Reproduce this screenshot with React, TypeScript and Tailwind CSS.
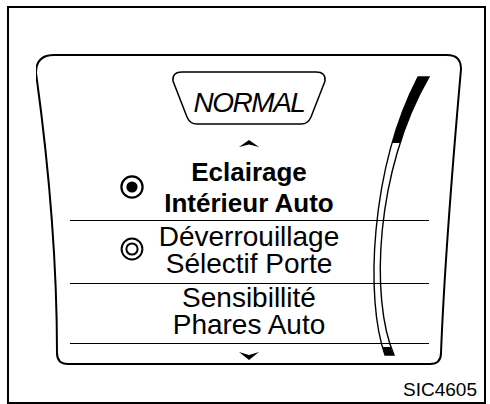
import React from "react";

const band =
  "M418 77 C370 170 365 300 385 355 L394 355 C370 300 375 170 429 77 Z";

function RadioFilled() {
  return (
    <svg width="24" height="24" viewBox="0 0 24 24" fill="none">
      <circle cx="12" cy="12" r="10.6" stroke="black" strokeWidth="2.2" />
      <circle cx="12" cy="12" r="5.6" fill="black" />
    </svg>
  );
}

function RadioRing() {
  return (
    <svg width="24" height="24" viewBox="0 0 24 24" fill="none">
      <circle cx="12" cy="12" r="10.4" stroke="black" strokeWidth="2" />
      <circle cx="12" cy="12" r="5.6" stroke="black" strokeWidth="2" />
    </svg>
  );
}

export default function App() {
  return (
    <div className="w-[490px] h-[404px] bg-white overflow-hidden font-['Liberation_Sans',Arial,sans-serif] text-black">
      <div className="ml-[7px] mt-[6px] w-[479px] h-[398px] border-2 border-black flex flex-col">
        <div className="relative ml-[27px] mt-[46px] w-[426px] h-[311px] flex flex-col items-center">
          <svg
            className="absolute inset-0"
            width="426"
            height="311"
            viewBox="36 54 426 311"
            fill="none"
          >
            <defs>
              <clipPath id="gclip">
                <rect x="300" y="60" width="200" height="83" />
                <rect x="300" y="347" width="200" height="20" />
              </clipPath>
            </defs>
            <path
              d="M54 55 L447 55 Q461 55 461 69 Q445 250 441 353 Q441 364 430 364 L68 364 Q57 364 57 353 Q57 225 36 73 Q36 55 54 55 Z"
              stroke="black"
              strokeWidth="2"
            />
            <path d={band} fill="black" clipPath="url(#gclip)" />
            <path d={band} stroke="black" strokeWidth="1.4" />
          </svg>

          <div className="relative mt-[16px] w-[156px] h-[56px]">
            <svg
              className="absolute inset-0"
              width="156"
              height="56"
              viewBox="171 70 156 56"
              fill="none"
            >
              <path
                d="M182 72 L316 72 Q326 72 325 81 L311 117 Q308 124 301 124 L197 124 Q190 124 187 117 L173 81 Q172 72 182 72 Z"
                stroke="black"
                strokeWidth="1.5"
              />
            </svg>
            <div className="relative pt-[19px] text-center italic text-[28px] leading-[28px] tracking-[-1.5px]">
              NORMAL
            </div>
          </div>

          <svg className="relative mt-[14px]" width="20" height="7" viewBox="0 0 20 7">
            <path d="M0 7 L10 0 L20 7 L10 4.5 Z" fill="black" />
          </svg>

          <div className="relative mt-[10px] w-[359px] grid border-b border-black pb-px">
            <div className="col-start-1 row-start-1 self-center justify-self-start ml-[50px] -mt-[2px]">
              <RadioFilled />
            </div>
            <div className="col-start-1 row-start-1 justify-self-center text-center font-bold text-[26px] leading-[31px]">
              <div>Eclairage</div>
              <div>Intérieur Auto</div>
            </div>
          </div>

          <div className="relative w-[359px] grid border-b border-black pt-[2px] pb-[6px]">
            <div className="col-start-1 row-start-1 self-center justify-self-start ml-[50px] -mt-[2px]">
              <RadioRing />
            </div>
            <div className="col-start-1 row-start-1 justify-self-center text-center text-[28px] leading-[27px]">
              <div>Déverrouillage</div>
              <div>Sélectif Porte</div>
            </div>
          </div>

          <div className="relative w-[359px] border-b border-black pb-[5px] text-center text-[28px] leading-[27px]">
            <div>Sensibillité</div>
            <div>Phares Auto</div>
          </div>

          <svg className="relative mt-[8px]" width="20" height="8" viewBox="0 0 20 8">
            <path d="M0 0 L10 3 L20 0 L10 8 Z" fill="black" />
          </svg>
        </div>

        <div className="mt-auto self-end mr-[7px] mb-[3px] text-[19px] leading-[19px]">
          SIC4605
        </div>
      </div>
    </div>
  );
}
